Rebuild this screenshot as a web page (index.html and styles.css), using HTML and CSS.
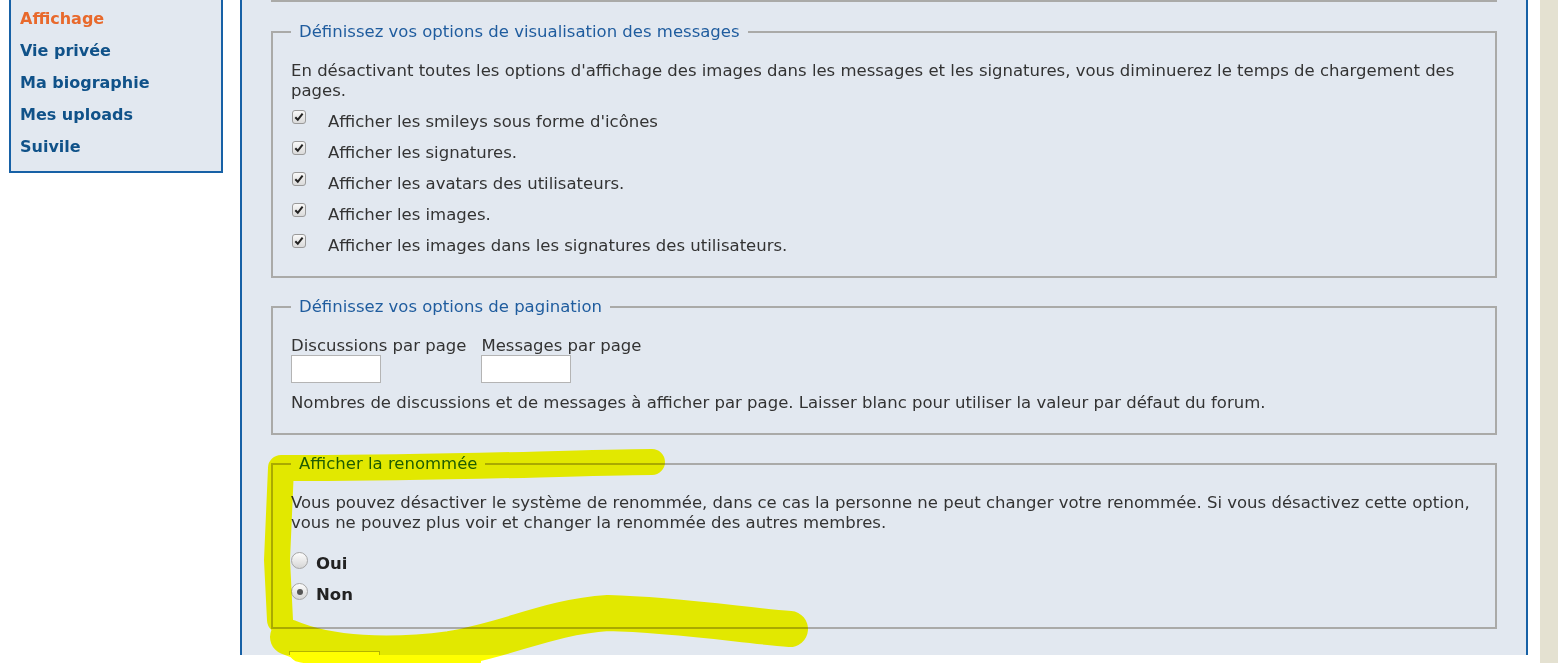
FILE: index.html
```html
<!DOCTYPE html>
<html lang="fr">
<head>
  <meta charset="UTF-8">
  <title>Préférences du forum</title>
  <link rel="stylesheet" href="styles.css">
</head>
<body>
  <div class="page">
    <nav class="side">
      <a class="active" href="#">Affichage</a>
      <a href="#">Vie privée</a>
      <a href="#">Ma biographie</a>
      <a href="#">Mes uploads</a>
      <a href="#">Suivile</a>
    </nav>

    <main class="panel">
      <div class="prev"></div>

      <fieldset class="box first">
        <legend>Définissez vos options de visualisation des messages</legend>
        <p>En désactivant toutes les options d'affichage des images dans les messages et les signatures, vous diminuerez le temps de chargement des pages.</p>
        <div class="opts">
          <label class="opt"><span class="check"><svg width="14" height="14" viewBox="0 0 14 14"><defs><linearGradient id="cb" x1="0" y1="0" x2="0" y2="1"><stop offset="0" stop-color="#fafafa"/><stop offset="1" stop-color="#d9d9d9"/></linearGradient></defs><rect x="0.5" y="0.5" width="13" height="13" rx="2.5" fill="url(#cb)" stroke="#9a9a9a"/><path d="M3.3 7.2 L5.8 9.8 L10.6 3.6" fill="none" stroke="#222" stroke-width="2"/></svg></span>Afficher les smileys sous forme d'icônes</label>
          <label class="opt"><span class="check"><svg width="14" height="14" viewBox="0 0 14 14"><rect x="0.5" y="0.5" width="13" height="13" rx="2.5" fill="url(#cb)" stroke="#9a9a9a"/><path d="M3.3 7.2 L5.8 9.8 L10.6 3.6" fill="none" stroke="#222" stroke-width="2"/></svg></span>Afficher les signatures.</label>
          <label class="opt"><span class="check"><svg width="14" height="14" viewBox="0 0 14 14"><rect x="0.5" y="0.5" width="13" height="13" rx="2.5" fill="url(#cb)" stroke="#9a9a9a"/><path d="M3.3 7.2 L5.8 9.8 L10.6 3.6" fill="none" stroke="#222" stroke-width="2"/></svg></span>Afficher les avatars des utilisateurs.</label>
          <label class="opt"><span class="check"><svg width="14" height="14" viewBox="0 0 14 14"><rect x="0.5" y="0.5" width="13" height="13" rx="2.5" fill="url(#cb)" stroke="#9a9a9a"/><path d="M3.3 7.2 L5.8 9.8 L10.6 3.6" fill="none" stroke="#222" stroke-width="2"/></svg></span>Afficher les images.</label>
          <label class="opt"><span class="check"><svg width="14" height="14" viewBox="0 0 14 14"><rect x="0.5" y="0.5" width="13" height="13" rx="2.5" fill="url(#cb)" stroke="#9a9a9a"/><path d="M3.3 7.2 L5.8 9.8 L10.6 3.6" fill="none" stroke="#222" stroke-width="2"/></svg></span>Afficher les images dans les signatures des utilisateurs.</label>
        </div>
      </fieldset>

      <fieldset class="box">
        <legend>Définissez vos options de pagination</legend>
        <div class="fields">
          <label class="field">Discussions par page<input type="text"></label>
          <label class="field">Messages par page<input type="text"></label>
        </div>
        <p class="note">Nombres de discussions et de messages à afficher par page. Laisser blanc pour utiliser la valeur par défaut du forum.</p>
      </fieldset>

      <fieldset class="box">
        <legend>Afficher la renommée</legend>
        <p>Vous pouvez désactiver le système de renommée, dans ce cas la personne ne peut changer votre renommée. Si vous désactivez cette option, vous ne pouvez plus voir et changer la renommée des autres membres.</p>
        <div class="radios">
          <label class="radio"><span class="dot"></span>Oui</label>
          <label class="radio"><span class="dot on"></span>Non</label>
        </div>
      </fieldset>

      <div class="submit"></div>
    </main>

    <div class="aside"></div>

    <svg class="marker" width="1558" height="663" viewBox="0 0 1558 663">
      <g fill="none" stroke="#ffff00" stroke-linecap="round" stroke-linejoin="round">
        <path stroke-width="26" d="M652 462 C560 463 420 469 281 468 L277 560 L280 620"/>
        <path stroke-width="36" d="M288 637 C330 655 390 657 450 649 C510 639 548 617 608 613 C680 615 740 625 790 629"/>
        <path stroke-width="22" d="M300 651 C360 664 420 665 470 661"/>
      </g>
    </svg>
  </div>
</body>
</html>
```

FILE: styles.css
```css
body {
  margin: 0;
  background: #fff;
  color: #333;
  font-family: "DejaVu Sans", Verdana, sans-serif;
  font-size: 16.5px;
}
.page {
  position: relative;
  display: flex;
  align-items: flex-start;
  height: 663px;
  overflow: hidden;
}
.side {
  margin-left: 9px;
  width: 214px;
  box-sizing: border-box;
  border: 2px solid #1761a6;
  border-top: none;
  background: #e2e8f0;
  padding: 3px 9px 8px;
  display: flex;
  flex-direction: column;
}
.side a {
  font-size: 16px;
  font-weight: bold;
  color: #105289;
  text-decoration: none;
  line-height: 32px;
}
.side a.active {
  color: #e8692c;
}
.panel {
  margin-left: 17px;
  width: 1288px;
  height: 655px;
  box-sizing: border-box;
  border-left: 2px solid #1761a6;
  border-right: 2px solid #1761a6;
  background: #e2e8f0;
  padding: 0 29px;
  overflow: hidden;
}
.aside {
  margin-left: 12px;
  flex: 1;
  height: 663px;
  background: #e4e1d1;
}
.prev {
  height: 0;
  border: 2px solid #aaaaa8;
  border-top: none;
}
.box {
  margin: 20px 0 0;
  border: 2px solid #aaaaa8;
  padding: 20px 18px 15px;
}
.box.first {
  margin-top: 21px;
}
.box legend {
  padding: 0 8px;
  line-height: 18px;
  color: #1f5c9e;
}
.box p {
  margin: 0;
  line-height: 20px;
}
.opts {
  margin-top: 5px;
}
.opt {
  display: flex;
  align-items: flex-start;
  line-height: 31px;
}
.check {
  display: block;
  margin: 4px 22px 0 1px;
  height: 14px;
}
.check svg {
  display: block;
}
.fields {
  display: flex;
  gap: 15px;
}
.field {
  display: flex;
  flex-direction: column;
  line-height: 20px;
}
.field input {
  width: 90px;
  height: 28px;
  box-sizing: border-box;
  margin: -1px 0 0;
  border: 1px solid #b4b4b4;
  background: #fff;
}
.box p.note {
  margin: 10px 0 5px;
}
.radios {
  margin-top: 15px;
  padding-bottom: 2px;
}
.radio {
  display: flex;
  align-items: flex-start;
  line-height: 31px;
  font-weight: bold;
  color: #222;
}
.dot {
  position: relative;
  width: 17px;
  height: 17px;
  box-sizing: border-box;
  margin: 4px 8px 0 0;
  border: 1px solid #a6a6a6;
  border-radius: 50%;
  background: linear-gradient(#fdfdfd, #d6d6d6);
}
.dot.on::after {
  content: "";
  position: absolute;
  left: 4.5px;
  top: 4.5px;
  width: 6px;
  height: 6px;
  border-radius: 50%;
  background: #555;
}
.submit {
  margin: 22px 0 0 18px;
  width: 91px;
  height: 30px;
  box-sizing: border-box;
  border: 1px solid #b4b4b4;
  background: #fff;
}
.marker {
  position: absolute;
  left: 0;
  top: 0;
  pointer-events: none;
  mix-blend-mode: multiply;
}
```
